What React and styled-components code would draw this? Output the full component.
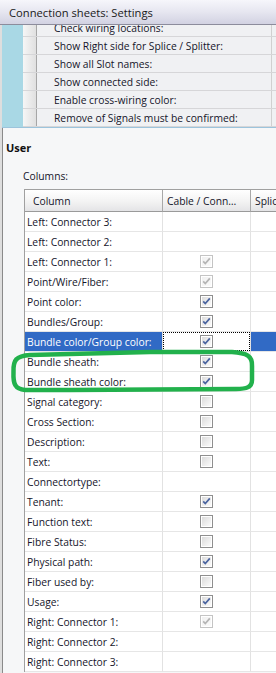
import React from "react";
import styled, { createGlobalStyle } from "styled-components";

const Global = createGlobalStyle`
  html, body { margin: 0; padding: 0; background: #f6f7f8; }
  body { font-family: "Open Sans", "Liberation Sans", sans-serif; font-size: 10.3px; color: #15152a; }
`;

const Window = styled.div`
  position: relative;
  width: 276px;
  height: 673px;
  overflow: hidden;
  display: flex;
  flex-direction: column;
  background: #f6f7f8;
  box-shadow: inset 2px 0 #dedede, inset 3px 0 #8a8a8a;
`;

const TitleBar = styled.div`
  flex: none;
  height: 24px;
  border-bottom: 1px solid #8c8c9c;
  background: linear-gradient(to bottom, #f6f6fb 0%, #e6e6f0 50%, #d2d2e2 100%);
  display: flex;
  align-items: center;
  padding-left: 9px;
  font-size: 11.2px;
  color: #1a1a1a;
  white-space: nowrap;
`;

const Settings = styled.div`
  flex: none;
  height: 102px;
  overflow: hidden;
  display: flex;
  margin-left: 2px;
  border-bottom: 1px solid #9cc4dc;
`;

const BlueStrip = styled.div`
  flex: none;
  width: 21px;
  background: #a9d8e5;
`;

const SettingsRows = styled.div`
  flex: 1;
  display: flex;
  flex-direction: column;
  justify-content: flex-end;
  min-width: 0;
`;

const SettingsRow = styled.div`
  flex: none;
  height: 17px;
  display: flex;
  border-bottom: 1px solid #d6d6d8;
`;

const RowHeader = styled.div`
  flex: none;
  width: 13px;
  background: linear-gradient(to right, #f6f6f6, #e0e0e0);
  border-right: 1px solid #a6a6a6;
`;

const SettingCell = styled.div`
  flex: none;
  width: 235px;
  padding-left: 17px;
  box-sizing: border-box;
  background: #f0f1f3;
  border-right: 1px solid #d0d0d0;
  display: flex;
  align-items: center;
  white-space: nowrap;
  overflow: hidden;
`;

const SettingRest = styled.div`
  flex: 1;
  background: #f0f1f3;
`;

const Body = styled.div`
  flex: 1;
  display: flex;
  flex-direction: column;
  padding: 1px 0 0 6px;
  min-height: 0;
`;

const SectionTitle = styled.div`
  font-weight: 700;
  font-size: 11px;
  margin-top: 10px;
  height: 18px;
  line-height: 18px;
  color: #111;
`;

const Label = styled.div`
  margin-top: 10px;
  margin-left: 17px;
  height: 18px;
  line-height: 18px;
`;

const Table = styled.div`
  margin-top: 4px;
  margin-left: 18px;
  width: 320px;
  border-left: 1px solid #a0a0a0;
  border-top: 1px solid #a0a0a0;
  background: #fff;
  display: grid;
  grid-template-columns: 138px 88px 1fr;
`;

const HeadCell = styled.div`
  height: 21px;
  border-bottom: 1px solid #9a9a9a;
  border-right: 1px solid #a8a8a8;
  background: linear-gradient(to bottom, #ffffff 0%, #f3f3f3 55%, #e4e4e6 100%);
  display: flex;
  align-items: center;
  padding-left: ${(p) => p.$pad}px;
  white-space: nowrap;
  overflow: hidden;
`;

const Cell = styled.div`
  height: 19px;
  border-bottom: 1px solid #e6e6e6;
  border-right: 1px solid #e2e2e2;
  display: flex;
  align-items: center;
  justify-content: ${(p) => (p.$center ? "center" : "flex-start")};
  padding-left: ${(p) => (p.$center ? 0 : 2)}px;
  white-space: nowrap;
  overflow: hidden;
  position: relative;
  background: ${(p) => (p.$sel ? "#316ac5" : "#fff")};
  color: ${(p) => (p.$sel ? "#fff" : "inherit")};
`;

const Focus = styled.div`
  position: absolute;
  inset: 0 0 0 0;
  border: 1px dotted #000;
  pointer-events: none;
`;

const Overlay = styled.svg`
  position: absolute;
  left: 0;
  top: 0;
  pointer-events: none;
`;

function Check({ state }) {
  const disabled = state === "dis";
  const checked = state === "on" || state === "dis";
  return (
    <svg width="13" height="13" viewBox="0 0 13 13">
      <defs>
        <linearGradient id={disabled ? "gd" : "ge"} x1="0" y1="0" x2="1" y2="1">
          <stop offset="0" stopColor={disabled ? "#f0f0f0" : "#dcdcdc"} />
          <stop offset="1" stopColor={disabled ? "#fafafa" : "#fbfbfb"} />
        </linearGradient>
      </defs>
      <rect x="0.5" y="0.5" width="12" height="12" fill="#fff" stroke={disabled ? "#c4c4c4" : "#8f8f8f"} />
      <rect x="2" y="2" width="9" height="9" fill={`url(#${disabled ? "gd" : "ge"})`} />
      {checked && (
        <path
          d="M3.2 6.4 L5.3 8.6 L9.8 3.4"
          fill="none"
          stroke={disabled ? "#b4b4b4" : "#4a64a0"}
          strokeWidth="1.7"
        />
      )}
    </svg>
  );
}

const settings = [
  "Check wiring locations:",
  "Show Right side for Splice / Splitter:",
  "Show all Slot names:",
  "Show connected side:",
  "Enable cross-wiring color:",
  "Remove of Signals must be confirmed:",
];

const rows = [
  ["Left: Connector 3:", null],
  ["Left: Connector 2:", null],
  ["Left: Connector 1:", "dis"],
  ["Point/Wire/Fiber:", "dis"],
  ["Point color:", "on"],
  ["Bundles/Group:", "on"],
  ["Bundle color/Group color:", "on", true],
  ["Bundle sheath:", "on"],
  ["Bundle sheath color:", "on"],
  ["Signal category:", "off"],
  ["Cross Section:", "off"],
  ["Description:", "off"],
  ["Text:", "off"],
  ["Connectortype:", null],
  ["Tenant:", "on"],
  ["Function text:", "off"],
  ["Fibre Status:", "off"],
  ["Physical path:", "on"],
  ["Fiber used by:", "off"],
  ["Usage:", "on"],
  ["Right: Connector 1:", "dis"],
  ["Right: Connector 2:", null],
  ["Right: Connector 3:", null],
];

export default function App() {
  return (
    <>
      <Global />
      <Window>
        <TitleBar>Connection sheets: Settings</TitleBar>
        <Settings>
          <BlueStrip />
          <SettingsRows>
            {settings.map((s) => (
              <SettingsRow key={s}>
                <RowHeader />
                <SettingCell>{s}</SettingCell>
                <SettingRest />
              </SettingsRow>
            ))}
          </SettingsRows>
        </Settings>
        <Body>
          <SectionTitle>User</SectionTitle>
          <Label>Columns:</Label>
          <Table>
            <HeadCell $pad={8}>Column</HeadCell>
            <HeadCell $pad={4}>Cable / Conn…</HeadCell>
            <HeadCell $pad={4}>Splice</HeadCell>
            {rows.map(([name, st, sel]) => (
              <React.Fragment key={name}>
                <Cell $sel={sel}>{name}</Cell>
                <Cell $center>
                  {st && <Check state={st} />}
                  {sel && <Focus />}
                </Cell>
                <Cell $sel={sel} />
              </React.Fragment>
            ))}
          </Table>
        </Body>
        <Overlay width="276" height="673" viewBox="0 0 276 673">
          <path
            d="M13.5 372 C13 360 16 356 30 355 L150 352 L232 352 C247 353 252.5 356 252 366 L252 380 C252 387 247 389 236 389 L70 390 L25 390 C15 389 13 384 13.5 372 Z"
            fill="none"
            stroke="#22b14c"
            strokeWidth="4.5"
          />
        </Overlay>
      </Window>
    </>
  );
}
